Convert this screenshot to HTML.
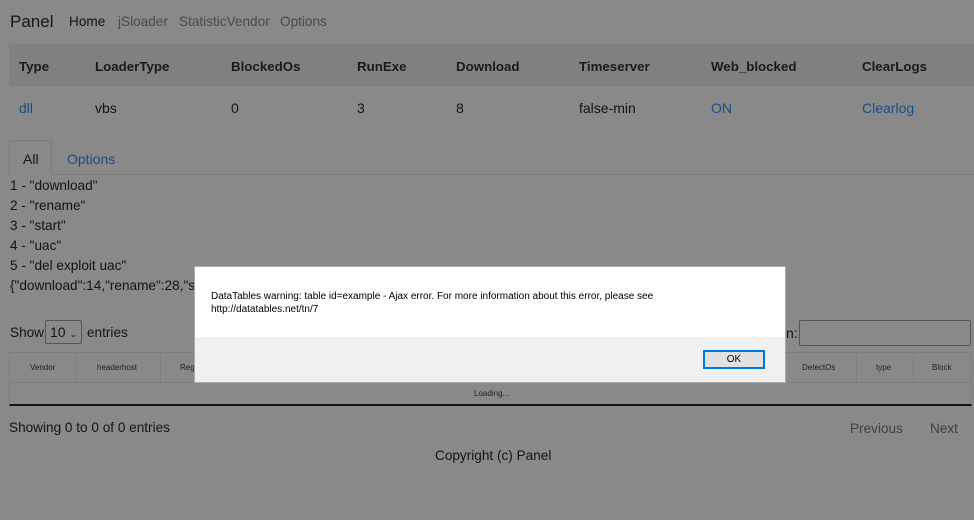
<!DOCTYPE html>
<html><head><meta charset="utf-8"><style>
*{margin:0;padding:0;box-sizing:border-box}
body{width:974px;height:520px;background:#898989;font-family:"Liberation Sans",sans-serif;color:#151515;position:relative;overflow:hidden;font-size:14px}
.a{position:absolute;white-space:nowrap}
.lk{color:#1d4c8a}
.nv{color:#4a4a4a;font-size:14px}
.th{font-weight:bold;font-size:13.3px;color:#1a1a1a}
.sm{font-size:8px;color:#222}
</style></head><body>
<div class="a" style="left:10px;top:12px;font-size:17px">Panel</div>
<div class="a" style="left:69px;top:14px;font-size:13.6px">Home</div>
<div class="a nv" style="left:118px;top:14px;font-size:13.6px">jSloader</div>
<div class="a nv" style="left:179px;top:14px;font-size:13.6px">StatisticVendor</div>
<div class="a nv" style="left:280px;top:14px;font-size:13.6px">Options</div>

<div class="a" style="left:9px;top:44px;width:965px;height:42px;background:#7e8081;border-top:1px solid #838585"></div>
<div class="a th" style="left:19px;top:59px">Type</div>
<div class="a th" style="left:95px;top:59px">LoaderType</div>
<div class="a th" style="left:231px;top:59px">BlockedOs</div>
<div class="a th" style="left:357px;top:59px">RunExe</div>
<div class="a th" style="left:456px;top:59px">Download</div>
<div class="a th" style="left:579px;top:59px">Timeserver</div>
<div class="a th" style="left:711px;top:59px">Web_blocked</div>
<div class="a th" style="left:862px;top:59px">ClearLogs</div>
<div class="a lk" style="left:19px;top:100px">dll</div>
<div class="a" style="left:95px;top:100px">vbs</div>
<div class="a" style="left:231px;top:100px">0</div>
<div class="a" style="left:357px;top:100px">3</div>
<div class="a" style="left:456px;top:100px">8</div>
<div class="a" style="left:579px;top:100px">false-min</div>
<div class="a lk" style="left:711px;top:100px">ON</div>
<div class="a lk" style="left:862px;top:100px">Clearlog</div>

<div class="a" style="left:9px;top:174px;width:965px;border-top:1px solid #7c7c7c"></div>
<div class="a" style="left:9px;top:140px;width:43px;height:35px;border:1px solid #7c7c7c;border-bottom:none;background:#898989"></div>
<div class="a" style="left:23px;top:151px">All</div>
<div class="a lk" style="left:67px;top:151px">Options</div>
<div class="a" style="left:10px;top:176px;line-height:20px;font-size:13.6px">1 - "download"<br>2 - "rename"<br>3 - "start"<br>4 - "uac"<br>5 - "del exploit uac"<br>{"download":14,"rename":28,"start"</div>

<div class="a" style="left:10px;top:325px;font-size:13.6px">Show</div>
<div class="a" style="left:45px;top:320px;width:37px;height:24px;border:1px solid #555;border-radius:2px;padding:3px 4px">10 <span style="font-size:9px">&#8964;</span></div>
<div class="a" style="left:87px;top:325px;font-size:13.6px">entries</div>
<div class="a" style="left:786px;top:325px">n:</div>
<div class="a" style="left:799px;top:320px;width:172px;height:26px;border:1px solid #555;border-radius:2px"></div>

<div class="a" style="left:9px;top:352px;width:963px;height:54px;border:1px solid #7e7e7e;border-bottom:2px solid #111"></div>
<div class="a" style="left:9px;top:382px;width:963px;border-top:1px solid #7e7e7e"></div>
<div class="a" style="left:76px;top:352px;height:30px;border-left:1px solid #7e7e7e"></div>
<div class="a" style="left:160px;top:352px;height:30px;border-left:1px solid #7e7e7e"></div>
<div class="a" style="left:856px;top:352px;height:30px;border-left:1px solid #7e7e7e"></div>
<div class="a" style="left:913px;top:352px;height:30px;border-left:1px solid #7e7e7e"></div>
<div class="a sm" style="left:30px;top:363px">Vendor</div>
<div class="a sm" style="left:97px;top:363px">headerhost</div>
<div class="a sm" style="left:180px;top:363px">Reg</div>
<div class="a sm" style="left:802px;top:363px">DetectOs</div>
<div class="a sm" style="left:876px;top:363px">type</div>
<div class="a sm" style="left:932px;top:363px">Block</div>
<div class="a sm" style="left:474px;top:389px">Loading...</div>

<div class="a" style="left:9px;top:420px;font-size:13.6px">Showing 0 to 0 of 0 entries</div>
<div class="a" style="left:850px;top:421px;color:#404040;font-size:13.6px">Previous</div>
<div class="a" style="left:930px;top:421px;color:#404040;font-size:13.6px">Next</div>
<div class="a" style="left:435px;top:448px;font-size:13.6px">Copyright (c) Panel</div>

<div class="a" style="left:194px;top:266px;width:592px;height:117px;background:#f0f0f0;border:1px solid #aaa"></div>
<div class="a" style="left:195px;top:267px;width:590px;height:70px;background:#fff"></div>
<div class="a" style="left:211px;top:290px;font-size:10px;line-height:13px;color:#000">DataTables warning: table id=example - Ajax error. For more information about this error, please see<br>http://datatables.net/tn/7</div>
<div class="a" style="left:703px;top:350px;width:62px;height:19px;background:#e1e1e1;border:2px solid #0078d7;font-size:10px;text-align:center;line-height:15px;color:#000">OK</div>
</body></html>
